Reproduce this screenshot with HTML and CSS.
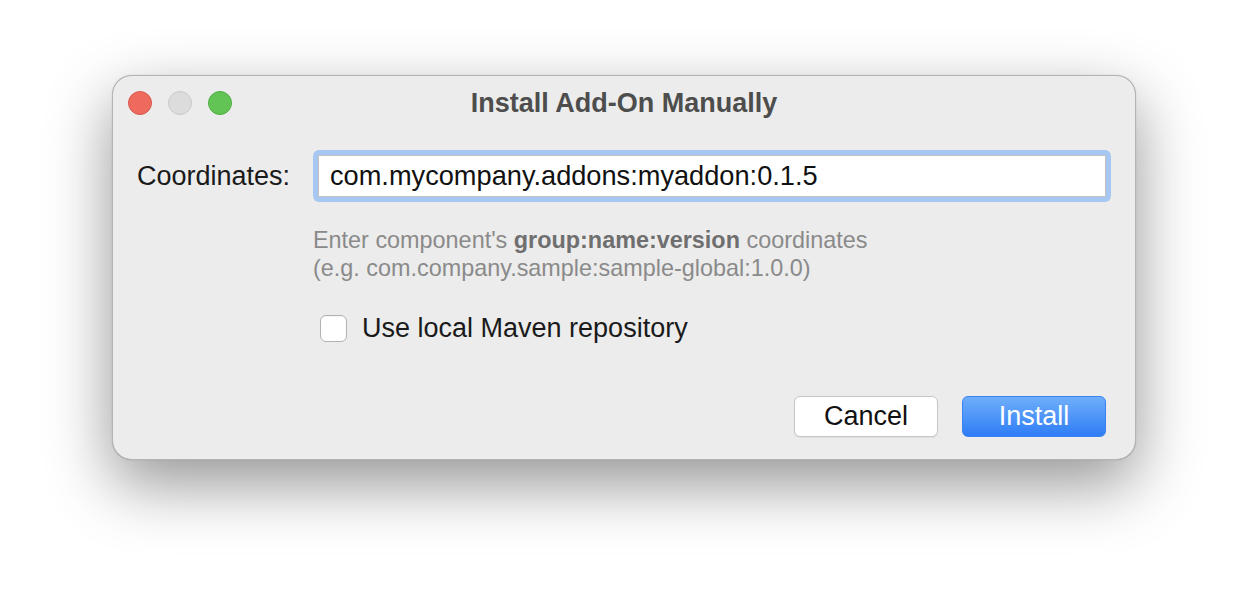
FILE: index.html
```html
<!DOCTYPE html>
<html>
<head>
<meta charset="utf-8">
<link rel="stylesheet" href="styles.css">
</head>
<body>
<div class="window">
  <div class="titlebar">
    <div class="lights">
      <span class="light red"></span>
      <span class="light gray"></span>
      <span class="light green"></span>
    </div>
    <div class="title">Install Add-On Manually</div>
  </div>
  <div class="content">
    <div class="row">
      <label class="label">Coordinates:</label>
      <div class="ring"><div class="field">com.mycompany.addons:myaddon:0.1.5</div></div>
    </div>
    <div class="hint">Enter component's <b>group:name:version</b> coordinates<br>(e.g. com.company.sample:sample-global:1.0.0)</div>
    <div class="check-row">
      <span class="checkbox"></span>
      <span class="check-label">Use local Maven repository</span>
    </div>
    <div class="buttons">
      <button class="btn cancel">Cancel</button>
      <button class="btn primary">Install</button>
    </div>
  </div>
</div>
</body>
</html>
```
FILE: styles.css
```css
html, body {
  margin: 0;
  background: #ffffff;
  width: 1248px;
  height: 608px;
  overflow: hidden;
}
body {
  padding: 75px 0 0 112px;
  box-sizing: border-box;
  font-family: "Liberation Sans", Arial, sans-serif;
}
.window {
  width: 1024px;
  height: 385px;
  box-sizing: border-box;
  background: #ececec;
  border: 1px solid #b4b4b4;
  border-radius: 20px;
  box-shadow: 0 24px 64px rgba(0, 0, 0, 0.42), 0 0 1px rgba(0,0,0,0.3);
  display: flex;
  flex-direction: column;
}
.titlebar {
  height: 55px;
  position: relative;
  display: flex;
  align-items: center;
  justify-content: center;
}
.lights {
  position: absolute;
  left: 15px;
  top: 15px;
  display: flex;
  gap: 16px;
}
.light {
  width: 24px;
  height: 24px;
  border-radius: 50%;
  box-sizing: border-box;
}
.red { background: #ee6a5f; border: 1px solid #d9574c; }
.gray { background: #dcdcdc; border: 1px solid #c9c9c9; }
.green { background: #61c454; border: 1px solid #4fae42; }
.title {
  font-size: 27px;
  font-weight: bold;
  color: #4d4d4d;
  margin-top: 0;
}
.content {
  flex: 1;
  display: flex;
  flex-direction: column;
  padding: 19px 24px 22px 24px;
}
.row {
  display: flex;
  align-items: center;
}
.label {
  width: 176px;
  font-size: 27px;
  color: #1a1a1a;
}
.ring {
  flex: 1;
  background: #a5c7f1;
  border-radius: 6px;
  padding: 5px;
}
.field {
  background: #ffffff;
  border: 1px solid #c2c2c2;
  height: 40px;
  line-height: 40px;
  padding-left: 11px;
  font-size: 27.2px;
  color: #111;
}
.hint {
  margin: 24px 0 0 176px;
  font-size: 23.4px;
  line-height: 28px;
  color: #8a8a8a;
}
.hint b {
  color: #6f6f6f;
}
.check-row {
  display: flex;
  align-items: center;
  margin: 31px 0 0 183px;
  gap: 15px;
}
.checkbox {
  width: 27px;
  height: 27px;
  box-sizing: border-box;
  background: #ffffff;
  border: 1px solid #b2b2b2;
  border-radius: 6px;
  box-shadow: inset 0 1px 1px rgba(0,0,0,0.05);
}
.check-label {
  font-size: 27px;
  color: #1a1a1a;
}
.buttons {
  margin-top: auto;
  margin-right: 5px;
  display: flex;
  justify-content: flex-end;
  gap: 24px;
}
.btn {
  width: 144px;
  height: 41px;
  border-radius: 6px;
  font-family: "Liberation Sans", Arial, sans-serif;
  font-size: 27px;
  padding: 0;
}
.cancel {
  background: #ffffff;
  border: 1px solid #c6c6c6;
  color: #111;
  box-shadow: 0 1px 1px rgba(0,0,0,0.06);
}
.primary {
  background: linear-gradient(#6eaefa, #2f7df6);
  border: 1px solid #3b82f0;
  color: #ffffff;
}
```
